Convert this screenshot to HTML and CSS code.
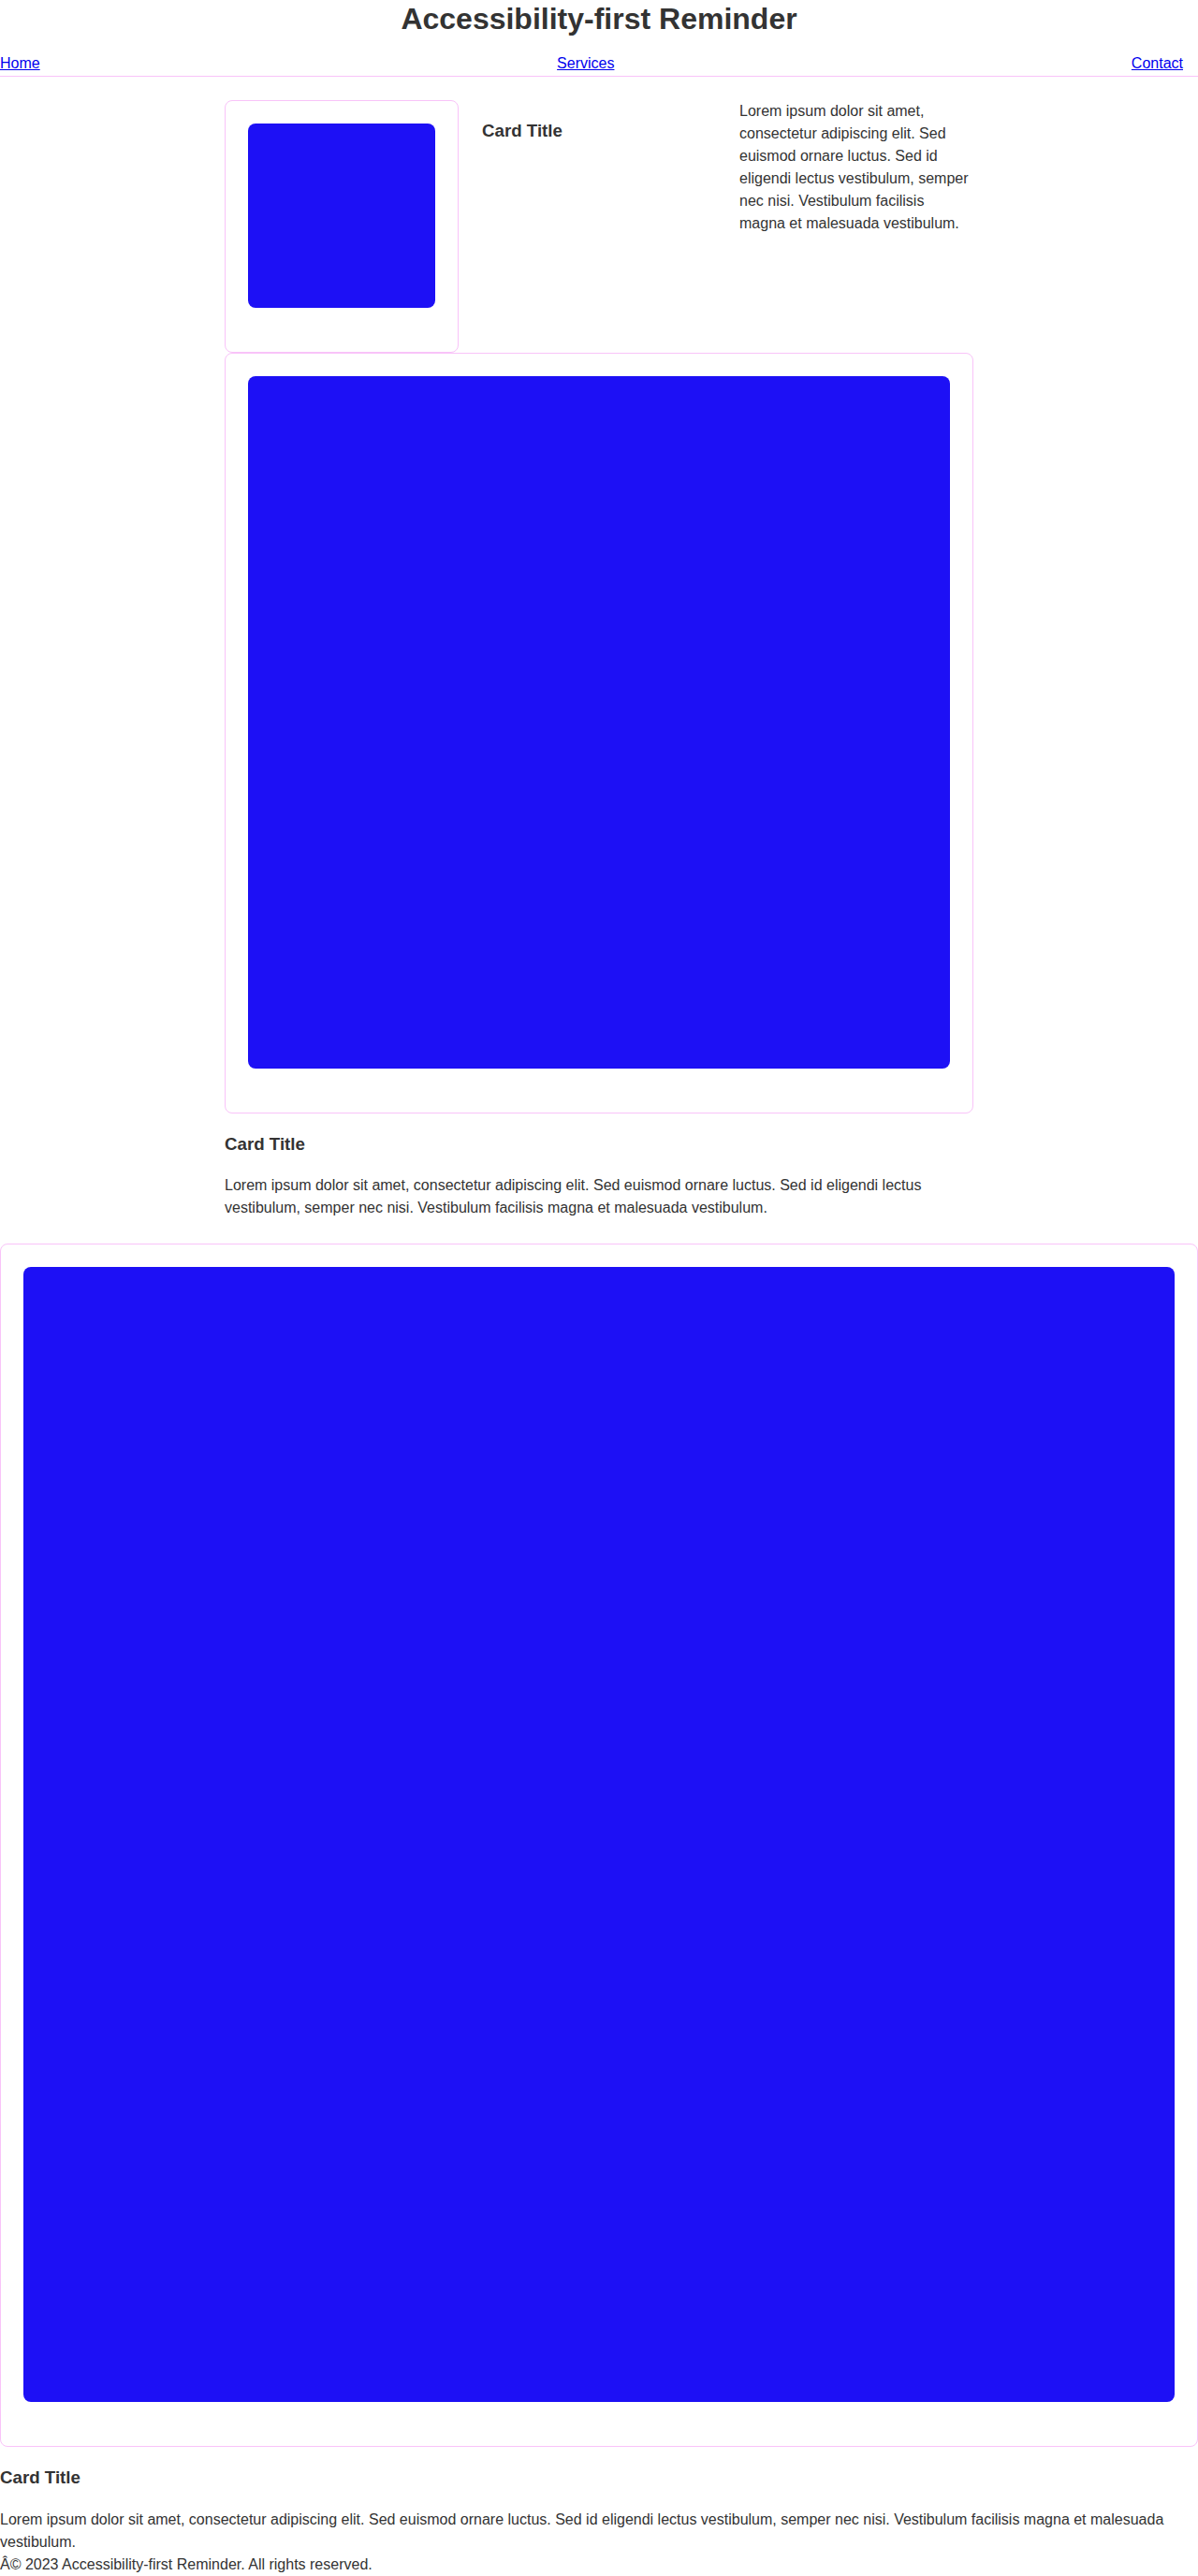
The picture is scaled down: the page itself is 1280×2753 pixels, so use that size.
FILE: index.html
```html
<!DOCTYPE html>
<html lang="en">
<head>
<meta charset="utf-8">
<title>Accessibility-first Reminder</title>
<link rel="stylesheet" href="styles.css">
</head>
<body>
<header class="site-header">
  <h1 class="site-title">Accessibility-first Reminder</h1>
  <nav class="site-nav">
    <ul class="nav-list">
      <li><a href="#">Home</a></li>
      <li><a href="#">Services</a></li>
      <li><a href="#">Contact</a></li>
    </ul>
  </nav>
</header>
<main class="main">
  <div class="row">
    <div class="card">
      <div class="card-image"></div>
    </div>
    <h3 class="card-title">Card Title</h3>
    <p class="card-text">Lorem ipsum dolor sit amet, consectetur adipiscing elit. Sed euismod ornare luctus. Sed id eligendi lectus vestibulum, semper nec nisi. Vestibulum facilisis magna et malesuada vestibulum.</p>
  </div>
  <div class="card">
    <div class="card-image"></div>
  </div>
  <h3 class="card-title">Card Title</h3>
  <p class="card-text">Lorem ipsum dolor sit amet, consectetur adipiscing elit. Sed euismod ornare luctus. Sed id eligendi lectus vestibulum, semper nec nisi. Vestibulum facilisis magna et malesuada vestibulum.</p>
</main>
<div class="card">
  <div class="card-image"></div>
</div>
<h3 class="card-title">Card Title</h3>
<p class="card-text">Lorem ipsum dolor sit amet, consectetur adipiscing elit. Sed euismod ornare luctus. Sed id eligendi lectus vestibulum, semper nec nisi. Vestibulum facilisis magna et malesuada vestibulum.</p>
<footer class="site-footer">Â© 2023 Accessibility-first Reminder. All rights reserved.</footer>
</body>
</html>
```

FILE: styles.css
```css
html, body {
  margin: 0;
  padding: 0;
  background: #ffffff;
}

body {
  font-family: "Liberation Sans", Arial, sans-serif;
  font-size: 16px;
  line-height: 1.5;
  color: #333333;
}

.site-header {
  display: block;
}

.site-title {
  margin: 0;
  font-size: 32px;
  line-height: 40px;
  font-weight: bold;
  text-align: center;
  color: #333333;
}

.site-nav {
  margin-top: 16px;
  padding-right: 16px;
  border-bottom: 1px solid #f9c3f9;
}

.nav-list {
  list-style: none;
  margin: 0;
  padding: 0 0 1px 0;
  display: flex;
  justify-content: space-between;
}

.nav-list a {
  color: #0000ee;
  text-decoration: underline;
}

.main {
  width: 800px;
  margin: 0 auto;
  padding: 25px 0 26px;
}

.row {
  display: grid;
  grid-template-columns: repeat(3, 1fr);
  column-gap: 25px;
  align-items: start;
}

.card {
  border: 1px solid #f9c3f9;
  border-radius: 8px;
  padding: 24px;
}

.card-image {
  background: #1d10f5;
  border-radius: 8px;
  aspect-ratio: 1230 / 1213;
  margin-bottom: 23px;
}

.card-title {
  font-size: 18.72px;
  font-weight: bold;
  margin: 18.72px 0;
  color: #333333;
}

.card-text {
  margin: 0;
}

.site-footer {
  display: block;
}
```
